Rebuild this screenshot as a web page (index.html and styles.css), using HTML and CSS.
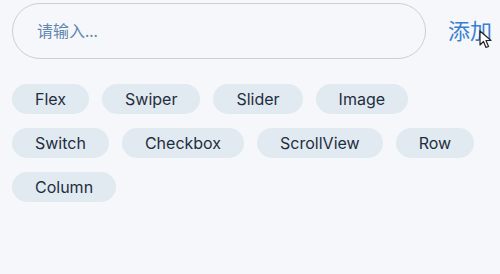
FILE: index.html
```html
<!DOCTYPE html>
<html lang="zh">
<head>
    <meta charset="UTF-8">
    <title>标签</title>
    <link rel="stylesheet" href="styles.css">
</head>
<body>
<div class="page">
    <div class="bar">
        <input class="ipt" type="text" placeholder="请输入...">
        <span class="add">添加
            <svg class="cursor" width="14" height="20" viewBox="0 0 14 20">
                <path d="M1 1 L1 15 L4.5 11.5 L7 17.5 L9.5 16.5 L7 10.5 L12 10.5 Z" fill="#fff" stroke="#222" stroke-width="1.2" stroke-linejoin="round"/>
            </svg>
        </span>
    </div>
    <ul class="tags">
        <li>Flex</li>
        <li>Swiper</li>
        <li>Slider</li>
        <li>Image</li>
        <li>Switch</li>
        <li>Checkbox</li>
        <li>ScrollView</li>
        <li>Row</li>
        <li>Column</li>
    </ul>
</div>
</body>
</html>
```

FILE: styles.css
```css
* {
    margin: 0;
    padding: 0;
    list-style: none;
    box-sizing: border-box;
}

body{
    background: #f6f7fa;
    font-family: Inter, "Noto Sans CJK SC", sans-serif;
}
.page{
    padding: 3px 8px 0 12px;
}
.bar{
    display: flex;
    align-items: center;
}
.ipt{
    flex: 1;
    height: 56px;
    border: 1px solid #c9cfd5;
    border-radius: 28px;
    background: #f6f7fa;
    padding: 0 24px;
    font-size: 16px;
    font-family: "Noto Sans", "Noto Sans CJK SC", sans-serif;
    outline: none;
}
.ipt::placeholder{
    color: #5f86b0;
}
.add{
    position: relative;
    margin-left: 22px;
    font-size: 22px;
    color: #3a7fd2;
    line-height: 1;
}
.cursor{
    position: absolute;
    left: 31px;
    top: 10px;
}
.tags{
    display: flex;
    flex-wrap: wrap;
    gap: 14px 13px;
    margin-top: 25px;
}
.tags li{
    height: 30px;
    line-height: 30px;
    padding: 0 23px;
    border-radius: 15px;
    background: #e1eaf0;
    color: #1f2e3f;
    font-size: 16px;
}
```
